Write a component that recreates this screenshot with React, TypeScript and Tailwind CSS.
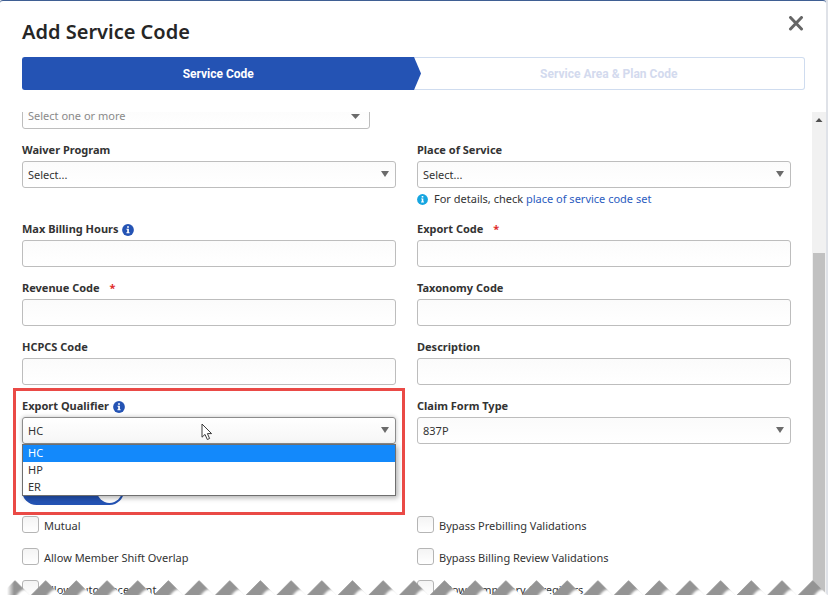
import React, { useState } from "react";

const boxClass =
  "h-[27px] w-full appearance-none rounded-[3px] border border-[#bdbdbd] bg-linear-to-b from-[#fbfbfb] to-white px-[5px] text-[11px] text-[#333] outline-none";

function InfoIcon({ className }: { className: string }) {
  return (
    <svg viewBox="0 0 12 12" className={className} aria-hidden="true">
      <circle cx="6" cy="6" r="5.9" fill="currentColor" />
      <path d="M5.1 2.3h1.8v1.5H5.1zM4.5 4.8h2.4v3.5h.7v1H4.4v-1h.8V5.8h-.7z" fill="#fff" />
    </svg>
  );
}

function Caret({ wide = false }: { wide?: boolean }) {
  return (
    <svg
      viewBox="0 0 10 6"
      preserveAspectRatio="none"
      className={
        wide
          ? "pointer-events-none absolute top-3 right-2.5 h-[5px] w-[9px]"
          : "pointer-events-none absolute top-2.5 right-[7px] h-1.5 w-2"
      }
      aria-hidden="true"
    >
      <path d="M0 0h10L5 6z" fill="#6b6b6b" />
    </svg>
  );
}

type FieldProps = {
  id: string;
  label: string;
  required?: boolean;
  info?: boolean;
  children: React.ReactNode;
};

function Field({ id, label, required, info, children }: FieldProps) {
  return (
    <div className="relative">
      <div className="flex h-[21px] items-center">
        <label htmlFor={id} className="text-[11px] font-bold text-[#333]">
          {label}
          {required && <span className="ml-2.5 text-[#e02b2b]">*</span>}
        </label>
        {info && <InfoIcon className="ml-1 size-3 text-[#2453b4]" />}
      </div>
      {children}
    </div>
  );
}

function TextField(props: { id: string; label: string; required?: boolean; info?: boolean }) {
  return (
    <Field {...props}>
      <input id={props.id} type="text" className={`block ${boxClass}`} />
    </Field>
  );
}

function Select({ id, options }: { id: string; options: string[] }) {
  return (
    <div className="relative">
      <select id={id} className={`block pt-px ${boxClass}`}>
        {options.map((o) => (
          <option key={o}>{o}</option>
        ))}
      </select>
      <Caret />
    </div>
  );
}

function Check({ id, label }: { id: string; label: string }) {
  return (
    <div className="flex h-[17px] items-center gap-[5px]">
      <input
        id={id}
        type="checkbox"
        className="size-[17px] shrink-0 appearance-none rounded-[3px] border border-[#b5b5b5] bg-linear-to-b from-[#f4f4f4] to-white checked:bg-[#2453b4]"
      />
      <label htmlFor={id} className="pt-[3px] text-[11px] text-[#333]">
        {label}
      </label>
    </div>
  );
}

function TornEdge() {
  return (
    <svg className="pointer-events-none absolute bottom-0 left-0 h-[15px] w-full" aria-hidden="true">
      <defs>
        <filter id="soft" x="-20%" y="-20%" width="140%" height="140%">
          <feGaussianBlur stdDeviation="1.1" />
        </filter>
        <clipPath id="tooth">
          <path d="M0 15.4L15.3 0L30.68 15.4z" />
        </clipPath>
        <pattern id="teeth" x="-0.3" y="0" width="30.68" height="15" patternUnits="userSpaceOnUse">
          <g clipPath="url(#tooth)">
            <path d="M0 15.4L15.3 0L30.68 15.4z" fill="#949494" />
            <path d="M15 19C17 14.5 20 10.500 25 9L36 14V19z" fill="#fff" filter="url(#soft)" />
          </g>
        </pattern>
        <linearGradient id="fade">
          <stop offset="0" stopColor="#fff" />
          <stop offset="0.5" stopColor="#fff" />
          <stop offset="1" stopColor="#fff" stopOpacity="0" />
        </linearGradient>
      </defs>
      <rect width="100%" height="15" fill="url(#teeth)" />
      <rect width="14" height="15" fill="url(#fade)" />
    </svg>
  );
}

const qualifiers = ["HC", "HP", "ER"];

export default function App() {
  const [qualifier, setQualifier] = useState("HC");

  return (
    <div className="relative h-screen overflow-hidden bg-[#dfe2e8] pr-0.5 font-['Noto_Sans',sans-serif]">
      <main className="flex h-full flex-col rounded-t-[3px] border-t border-[#3f5f93] bg-white">
        <header className="flex h-14 shrink-0 items-start justify-between px-[22px] pt-[15px]">
          <h1 className="text-[20px] leading-8 font-semibold text-[#262626]">Add Service Code</h1>
          <button type="button" aria-label="Close" className="text-[#666]">
            <svg viewBox="0 0 16 16" className="size-4" aria-hidden="true">
              <path d="M2.5 1.5L13.500 13M13.500 1.5L2.5 13" stroke="currentColor" strokeWidth="3" strokeLinecap="round" />
            </svg>
          </button>
        </header>

        <ol className="mr-[21px] ml-[22px] grid h-[33px] shrink-0 grid-cols-2 font-[Roboto,sans-serif] text-[12px] font-bold">
          <li className="flex items-center justify-center rounded-l-[3px] border border-r-0 border-[#2453b4] bg-[#2453b4] text-white">
            Service Code
          </li>
          <li className="relative flex items-center justify-center rounded-r-[3px] border border-l-0 border-[#cfdcef] text-[#d3daee]">
            <svg
              viewBox="0 0 7 33"
              preserveAspectRatio="none"
              className="absolute -top-px left-0 h-[33px] w-[7px]"
              aria-hidden="true"
            >
              <path d="M0 0L7 16.5L0 33z" fill="#2453b4" />
            </svg>
            Service Area &amp; Plan Code
          </li>
        </ol>

        <div className="mt-[22px] flex min-h-0 flex-1">
          <form className="flex-1 overflow-hidden pr-[21px] pl-[22px]">
            <div className="relative -mt-2.5 mr-[421px]">
              <input
                type="text"
                aria-label="Select one or more"
                placeholder="Select one or more"
                className={`block placeholder:text-[#8a8a8a] ${boxClass}`}
              />
              <Caret wide />
            </div>

            <div className="mt-[11px] grid grid-cols-2 gap-x-[21px] gap-y-[11px]">
              <Field id="waiver" label="Waiver Program">
                <Select id="waiver" options={["Select..."]} />
              </Field>
              <Field id="place" label="Place of Service">
                <Select id="place" options={["Select..."]} />
                <p className="flex h-5 items-center pt-0.5 text-[11px] text-[#333]">
                  <InfoIcon className="mr-1.5 size-[11px] text-[#16a5e0]" />
                  <span>
                    For details, check{" "}
                    <a href="#codes" className="text-[#2c5cc0]">
                      place of service code set
                    </a>
                  </span>
                </p>
              </Field>
              <TextField id="hours" label="Max Billing Hours" info />
              <TextField id="export" label="Export Code" required />
              <TextField id="revenue" label="Revenue Code" required />
              <TextField id="taxonomy" label="Taxonomy Code" />
              <TextField id="hcpcs" label="HCPCS Code" />
              <TextField id="description" label="Description" />
              <Field id="qualifier" label="Export Qualifier" info>
                <div className="relative rounded-[3px] shadow-[0_0_4px_rgba(0,0,0,0.25)]">
                  <select
                    id="qualifier"
                    value={qualifier}
                    onChange={(e) => setQualifier(e.target.value)}
                    className="block h-[27px] w-full appearance-none rounded-[3px] border border-[#8c8c8c] bg-linear-to-b from-white to-[#f6f6f6] px-[5px] pt-px text-[11px] text-[#333] outline-none"
                  >
                    {qualifiers.map((q) => (
                      <option key={q}>{q}</option>
                    ))}
                  </select>
                  <Caret />
                  <ul
                    role="listbox"
                    aria-label="Export Qualifier"
                    className="absolute inset-x-0 top-full z-10 h-[52px] overflow-hidden border border-[#6f6f6f] bg-white text-[11px] leading-4 shadow-[2px_2px_5px_rgba(0,0,0,0.3)]"
                  >
                    {qualifiers.map((q) => (
                      <li
                        key={q}
                        role="option"
                        aria-selected={q === qualifier}
                        onClick={() => setQualifier(q)}
                        className="h-[17px] px-[5px] text-[#333] aria-selected:bg-[#1389fb] aria-selected:text-white"
                      >
                        {q}
                      </li>
                    ))}
                  </ul>
                  <svg viewBox="0 0 12 18" className="absolute top-1.5 left-[179px] h-[18px] w-3" aria-hidden="true">
                    <path
                      d="M1 1V14.2L4 11.4L6.3 16.5L8.6 15.5L6.4 10.6H10.6z"
                      fill="#fff"
                      stroke="#3a3a3a"
                      strokeWidth="1"
                    />
                  </svg>
                </div>
                <div className="pointer-events-none absolute -inset-x-[9px] -top-2 z-20 h-[127px] border-3 border-[#ea4a46]" />
              </Field>
              <Field id="claim" label="Claim Form Type">
                <Select id="claim" options={["837P"]} />
              </Field>
            </div>

            <input
              type="checkbox"
              role="switch"
              defaultChecked
              aria-label="Active"
              className="mt-8 flex h-[29px] w-[102px] appearance-none items-center justify-end rounded-full bg-[#2453b4] px-0.5 before:size-[25px] before:rounded-full before:bg-white"
            />

            <div className="mt-[11px] grid grid-cols-2 gap-x-[21px] gap-y-[15px]">
              <Check id="mutual" label="Mutual" />
              <Check id="prebilling" label="Bypass Prebilling Validations" />
              <Check id="overlap" label="Allow Member Shift Overlap" />
              <Check id="review" label="Bypass Billing Review Validations" />
              <Check id="auto" label="Allow Auto Placement" />
              <Check id="temporary" label="Allow Temporary Caregivers" />
            </div>
          </form>

          <div className="flex w-3.5 shrink-0 flex-col bg-[#f1f1f1]" aria-hidden="true">
            <svg viewBox="0 0 14 16" className="h-4 w-3.5">
              <path d="M3.5 10L7 6L10.500 10z" fill="#505050" />
            </svg>
            <div className="mx-px mt-[125px] flex-1 bg-[#c1c1c1]" />
          </div>
        </div>
      </main>
      <TornEdge />
    </div>
  );
}
